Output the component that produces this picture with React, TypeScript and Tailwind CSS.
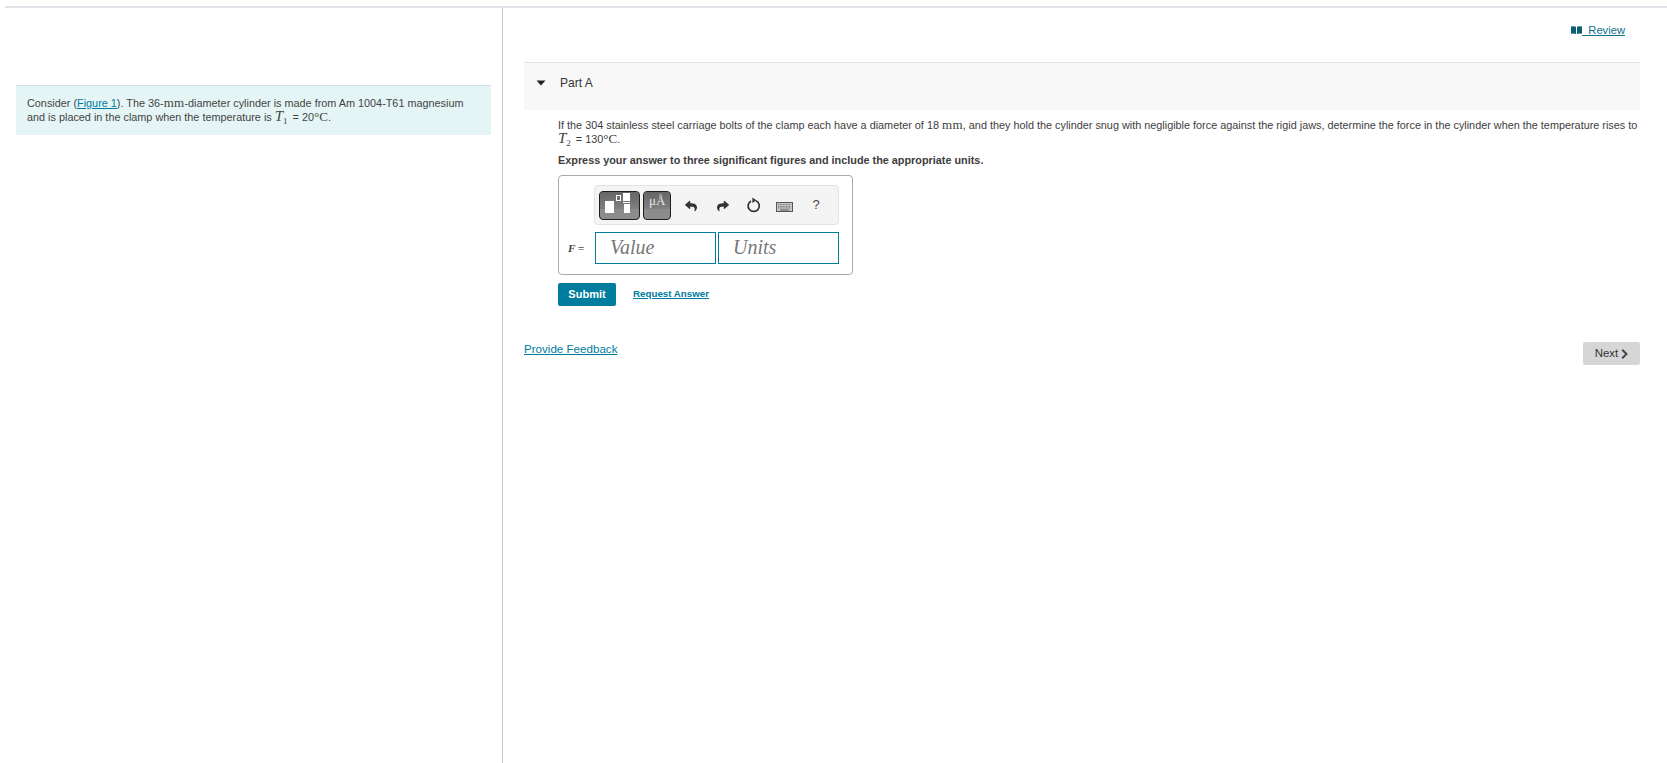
import { FaReply, FaShare } from 'react-icons/fa';

const mathFont = "font-['Liberation_Serif',serif]";

function Mm() {
  return <span className={`${mathFont} text-[13px] tracking-[0.3px]`}>mm</span>;
}

function Sym({ name, sub }: { name: string; sub: string }) {
  return (
    <span className={`${mathFont} mr-[2px] text-[15px] leading-[12px]`}>
      <i>{name}</i>
      <span className="relative top-[3px] text-[9px]">{sub}</span>
    </span>
  );
}

function Deg() {
  return <span className={`${mathFont} text-[13px] leading-[12px]`}>°C</span>;
}

function BookIcon() {
  return (
    <svg width="11" height="8" viewBox="0 0 11 8">
      <path d="M0 0.6 Q2.8 -0.2 5 0.8 L5 8 Q2.8 7 0 7.8 Z M6 0.8 Q8.2 -0.2 11 0.6 L11 7.8 Q8.2 7 6 8 Z" fill="#0b5f73" />
    </svg>
  );
}

function ToolbarButton({ width, children }: { width: string; children: React.ReactNode }) {
  return (
    <div className={`relative h-[29px] ${width} overflow-hidden rounded-[4px] border border-[#1f1f1f] bg-[#8c8c8c]`}>
      <div className="absolute inset-x-0 top-0 h-[17px] bg-gradient-to-b from-[#666666] to-[#808080]" />
      {children}
    </div>
  );
}

function ReloadIcon() {
  return (
    <svg width="15" height="16" viewBox="0 0 15 16">
      <path d="M5 3.9 A5.6 5.6 0 1 0 10 3.7" fill="none" stroke="#333" strokeWidth="1.7" />
      <path d="M6.4 0.4 L10.4 3.2 L6.4 6 Z" fill="#333" />
    </svg>
  );
}

function KeyboardIcon() {
  return (
    <svg width="17" height="10" viewBox="0 0 17 10">
      <rect x="0.5" y="0.5" width="16" height="9" fill="#c9c9c9" stroke="#555" />
      <path d="M2 2.5 H15 M2 4.5 H15 M2 6 H15" stroke="#6b6b6b" strokeWidth="0.9" strokeDasharray="1 0.6" />
      <path d="M4 8 H13" stroke="#555" strokeWidth="1" />
    </svg>
  );
}

export default function App() {
  return (
    <div className="h-[763px] overflow-hidden bg-white pl-[5px] pt-[6px] font-['Liberation_Sans',Arial,sans-serif] text-[10.85px] text-[#3d3d3d]">
      <div className="flex h-full border-t-2 border-[#e1e4e9]">
        {/* Left panel */}
        <div className="w-[497px] shrink-0 pl-[11px] pt-[77px]">
          <div className="h-[50px] w-[475px] border-t border-[#d3e0e4] bg-[#e5f5f5] px-[11px] pt-[10px] leading-[14px] text-[#444]">
            <div className="whitespace-nowrap">
              Consider (<a className="text-[#007c9e] underline">Figure 1</a>). The 36-<Mm />-diameter cylinder is made from Am 1004-T61 magnesium
            </div>
            <div className="whitespace-nowrap">
              and is placed in the clamp when the temperature is <Sym name="T" sub="1" /> = 20<Deg />.
            </div>
          </div>
        </div>

        {/* Right panel */}
        <div className="min-w-0 flex-1 border-l border-[#bcd0e0] pl-[21px] pr-[27px]">
          <div className="flex h-[54px] items-start justify-end pr-[15px] pt-[14px]">
            <a className="flex items-center text-[11.2px] text-[#0b6f8a]">
              <BookIcon />
              <span className="underline">&nbsp;&nbsp;Review</span>
            </a>
          </div>

          <div className="flex h-[48px] items-start border-t border-[#e3e3e3] bg-[#f8f8f8] pt-[13px]">
            <svg width="10" height="6" viewBox="0 0 10 6" className="ml-[12px] mt-[4px]">
              <path d="M0.5 0.5 L9.5 0.5 L5 5.5 Z" fill="#222" />
            </svg>
            <span className="ml-[14px] text-[12px] leading-[14px] text-[#333]">Part A</span>
          </div>

          <div className="pl-[34px]">
            <p className="mt-[9px] leading-[12px] text-[#3d3d3d]">
              <span className="block whitespace-nowrap">
                If the 304 stainless steel carriage bolts of the clamp each have a diameter of 18 <Mm />, and they hold the cylinder snug with negligible force against the rigid jaws, determine the force in the cylinder when the temperature rises to
              </span>
              <span className="mt-px block whitespace-nowrap">
                <Sym name="T" sub="2" /> = 130<Deg />.
              </span>
            </p>
            <p className="mt-[7px] font-bold leading-[14px] text-[#3d3d3d]">
              Express your answer to three significant figures and include the appropriate units.
            </p>

            {/* Answer box */}
            <div className="mt-[8px] h-[100px] w-[295px] rounded-[4px] border border-[#a9a9a9] pl-[9px] pt-[9px]">
              <div className="ml-[26px] flex h-[40px] w-[245px] items-center rounded-[4px] border border-[#e2e2e2] bg-[#f4f4f4] pl-[4px]">
                <ToolbarButton width="w-[41px]">
                  <div className="absolute left-[5px] top-[9px] h-[12px] w-[9px] bg-white" />
                  <div className="absolute left-[16px] top-[3px] h-[6px] w-[5px] border border-white" />
                  <div className="absolute left-[23px] top-[1px] h-[8px] w-[7px] bg-white" />
                  <div className="absolute left-[23px] top-[10px] h-px w-[7px] bg-white" />
                  <div className="absolute left-[24px] top-[12px] h-[9px] w-[6px] bg-white" />
                </ToolbarButton>
                <div className="w-[3px]" />
                <ToolbarButton width="w-[28px]">
                  <span className={`absolute left-[5px] top-[1px] ${mathFont} text-[13px] leading-[16px] text-[#e8e8e8]`}>μÅ</span>
                </ToolbarButton>
                <div className="ml-[11px] mt-[2px] flex w-[17px] justify-center text-[#333]"><FaReply size={12} /></div>
                <div className="ml-[15px] mt-[2px] flex w-[17px] justify-center text-[#333]"><FaShare size={12} /></div>
                <div className="ml-[14px] flex w-[17px] justify-center"><ReloadIcon /></div>
                <div className="ml-[14px] mt-[4px] flex w-[17px] justify-center"><KeyboardIcon /></div>
                <div className="ml-[17px] w-[12px] text-center text-[13px] text-[#444]">?</div>
              </div>

              <div className="mt-[7px] flex items-center">
                <span className={`${mathFont} w-[27px] text-[11px] font-bold text-[#444]`}>
                  <i>F</i> =
                </span>
                <div className={`flex h-[32px] w-[121px] items-center border border-[#007c9e] pb-[2px] pl-[14px] ${mathFont} text-[20px] italic text-[#777]`}>Value</div>
                <div className={`ml-[2px] flex h-[32px] w-[121px] items-center border border-[#007c9e] pb-[2px] pl-[14px] ${mathFont} text-[20px] italic text-[#777]`}>Units</div>
              </div>
            </div>

            <div className="mt-[8px] flex items-center">
              <button className="h-[23px] w-[58px] rounded-[2px] bg-[#007c9e] text-[11px] font-bold text-white">Submit</button>
              <a className="ml-[17px] text-[9.75px] font-bold text-[#007c9e] underline">Request Answer</a>
            </div>
          </div>

          <div className="mt-[34px] flex items-start justify-between">
            <a className="text-[11.6px] text-[#007c9e] underline">Provide Feedback</a>
            <button className="mt-[2px] flex h-[23px] w-[57px] items-center justify-center rounded-[2px] bg-[#d6d6d6] text-[11.5px] text-[#333]">
              Next
              <svg width="7" height="10" viewBox="0 0 7 10" className="ml-[3px]">
                <path d="M1.2 0.8 L5.5 5 L1.2 9.2" fill="none" stroke="#444" strokeWidth="2" />
              </svg>
            </button>
          </div>
        </div>
      </div>
    </div>
  );
}
